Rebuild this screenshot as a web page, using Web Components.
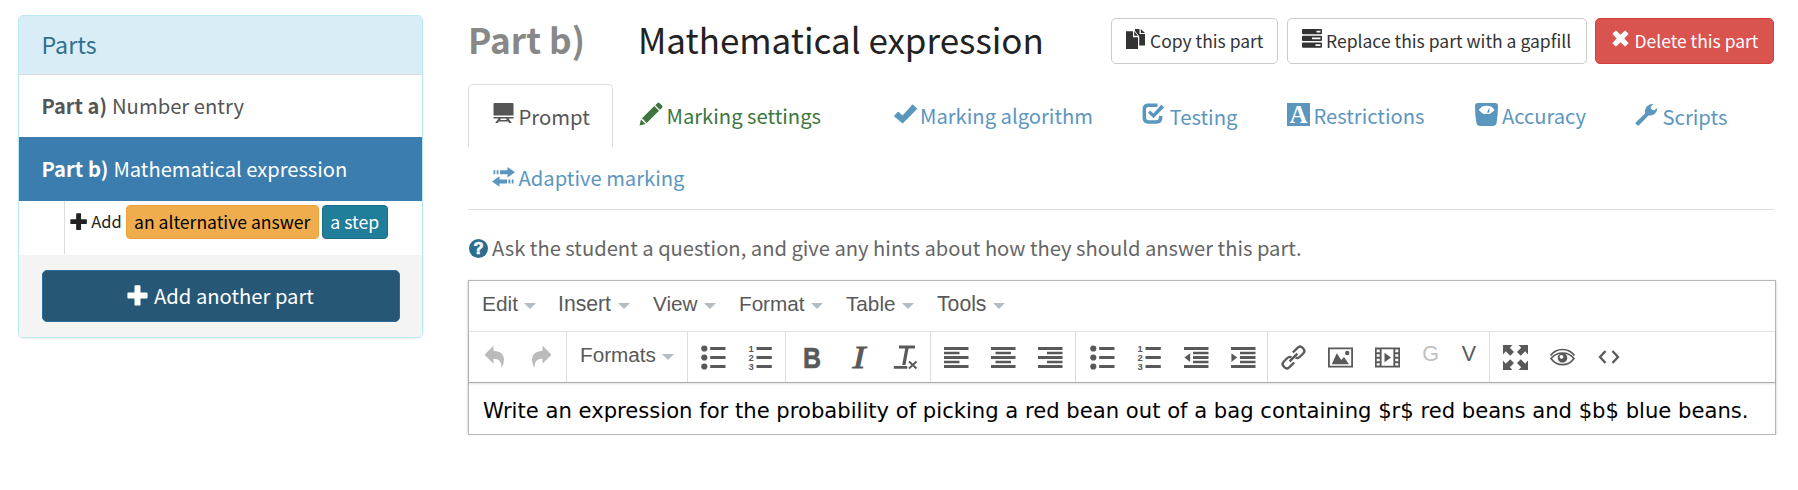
<!DOCTYPE html>
<html lang="en">
<head>
<meta charset="utf-8">
<title>Question editor - parts</title>
<style>
  body { margin: 0; background: #fff; font-family: "Noto Sans CJK SC", "Open Sans", sans-serif; color: #222; }
</style>
</head>
<body>
<question-app></question-app>

<script>
const ICONS = {
  plus: [21, 21, '<path d="M7.500 1.200q0-.9.9-.9h4.200q.9 0 .9.9V7.500h6.200q.9 0 .9.9v4.200q0 .9-.9.9H13.500v6.200q0 .9-.9.9H8.400q-.9 0-.9-.9V13.500H1.300q-.9 0-.9-.9V8.400q0-.9.9-.9H7.500z"/>'],
  prompt: [21, 22, '<path d="M1.500 0h18q1 0 1 1v11.500H.5V1q0-1 1-1zM.5 14h20v1.600H15.500l3.300 4.400h-2.600l-1-1.500H5.800l-1 1.500H2.200l3.300-4.400H.5zM7.900 15.600 7.200 17h6.600l-.7-1.400z"/>'],
  pencil: [24, 24, '<path d="M.5 23.500 2 17.400 6.600 22zM3 16.300 15.300 4 20 8.700 7.700 21zM16.300 3.200 18.600.9q.9-.8 1.700 0l2.900 2.900q.8.900 0 1.700L20.900 7.800z"/>'],
  check: [24, 20, '<path d="M.3 11.500 3.800 8q.5-.5 1 0l3.700 3.600L18.200.7q.5-.5 1 0l3.600 3.600q.5.5 0 1L9.200 19q-.6.5-1.200 0L.3 12.500q-.4-.5 0-1z"/>'],
  testing: [23, 22, '<path d="M15.500 2.300H6.200Q2.300 2.300 2.300 6.200V15q0 3.900 3.900 3.900h8.500q3.900 0 3.900-3.900v-2" fill="none" stroke="currentColor" stroke-width="3.500"/><path d="M6 9.700 8.200 7.500 11.400 10.500 19.200 1.800 22.200 4.400 11.500 15.300z"/>'],
  restrict: [23, 23, '<path d="M0 0h23v23H0z"/><text x="11.500" y="19.600" text-anchor="middle" font-family="Liberation Serif,serif" font-size="25" font-weight="700" fill="#fff">A</text>'],
  scale: [23, 23, '<path fill-rule="evenodd" d="M3 0h17q3 0 3 3-.2 9-1.300 16.500Q21 23 17.500 23h-12Q2 23 1.300 19.500 0 12 0 3 0 0 3 0zm.8 7.200 4 3.400q.8.600 1.700.4 2-.3 4.300 0 .9.100 1.700-.5l4-3.300Q17 2.800 11.500 2.800T3.800 7.200z"/><path d="M12 9.500 14.300 4.500 14.500 9.600z"/>'],
  wrench: [23, 23, '<path d="M.7 19.600 10 10.500Q9.300 6.500 11.800 3.500 14.300.6 18.700.7L16 3.500q-.6 1 0 1.900l1.600 1.500q1 .6 2 0L22.400 4.700q0 4-2.800 6.400-2.600 1.900-5.900 1.200L4.300 21.900q-1 1-2 0L.7 20.900q-.4-.6 0-1.300z"/>'],
  adaptive: [24, 20, '<path d="M1.500 3.300h1.800v4H1.500zM4.700 3.300h1.800v4H4.700zM8 3.300h7.500V0L23 5.300 15.500 10.600V7.300H8zM21.500 12.500h-1.800v4h1.800zM18.300 12.500h-1.800v4h1.800zM15 12.500H7.500V9.200L0 14.500 7.500 19.800v-3.300H15z"/>'],
  copy: [20, 20, '<path d="M0 2.200h7v6h5V20H0zM8.200 2.200 12 6.800H8.200zM9 0h4.500v5h5.500v11.500H13.200V7.200L9 2z"/><path d="M14.800 0 19 4H14.800z"/>'],
  server: [20, 20, '<path fill-rule="evenodd" d="M1 0h18q1 0 1 1v3.300q0 1-1 1H1q-1 0-1-1V1Q0 0 1 0zm13.500 1.700v1.800h4V1.700zM1 6.800h18q1 0 1 1v3.200q0 1-1 1H1q-1 0-1-1V7.800q0-1 1-1zm9 1.700v1.800h8.500V8.500zM1 13.500h18q1 0 1 1v3.300q0 1-1 1H1q-1 0-1-1v-3.300q0-1 1-1zm12.500 1.700v1.800h5v-1.800z"/>'],
  cross: [17, 17, '<path d="M.7 3.500 3.500.700q.4-.4.800 0L8.500 4.700 12.700.700q.4-.4.800 0l2.800 2.800q.4.400 0 .8L12.300 8.500l4 4.200q.4.400 0 .8l-2.800 2.800q-.4.400-.8 0L8.500 12.300l-4.200 4q-.4.400-.8 0L.7 13.500q-.4-.4 0-.8l4-4.200-4-4.200q-.4-.4 0-.8z"/>'],
  help: [19, 19, '<circle cx="9.500" cy="9.500" r="9.500"/><text x="9.500" y="15.300" text-anchor="middle" font-family="Liberation Sans,sans-serif" font-size="16.500" font-weight="700" fill="#fff" stroke="#fff" stroke-width=".7">?</text>'],
  undo: [21, 24, '<path d="M9.500.5v5.200Q19.500 6 20 14.500q.1 5-2.600 8.500.8-9.300-7.900-9.300v5L.500 9.700z"/>'],
  redo: [21, 24, '<path d="M11.500.5v5.200Q1.500 6 1 14.500.9 19.500 3.600 23q-.8-9.300 7.900-9.300v5l9-9z"/>'],
  ul: [25, 25, '<circle cx="3.300" cy="3.500" r="3.100"/><circle cx="3.300" cy="12.500" r="3.100"/><circle cx="3.300" cy="21.500" r="3.100"/><path d="M9.200 2h15.300v3H9.200zM9.200 11h15.300v3H9.200zM9.200 20h15.300v3H9.200z"/>'],
  ol: [25, 25, '<path d="M8.500 2h15.300v3H8.500zM8.500 11h15.300v3H8.500zM8.500 20h15.300v3H8.500z"/><g font-family="Liberation Sans,sans-serif" font-weight="700" font-size="9.500"><text x=".5" y="6.800">1</text><text x=".5" y="15.800">2</text><text x=".5" y="24.800">3</text></g>'],
  bold: [20, 25, '<text x="10" y="22.500" text-anchor="middle" font-family="Liberation Sans,sans-serif" font-weight="700" font-size="29.500" textLength="18" lengthAdjust="spacingAndGlyphs" stroke="currentColor" stroke-width=".6">B</text>'],
  italic: [22, 25, '<text x="11" y="22.500" text-anchor="middle" font-family="Liberation Serif,serif" font-style="italic" font-size="31" textLength="13" lengthAdjust="spacingAndGlyphs" stroke="currentColor" stroke-width=".8">I</text>'],
  clear: [25, 25, '<path d="M6 .5h16v3h-6.500L12.500 20H9.200L12.200 3.500H6zM.8 21h13.500v2.800H.8z"/><path d="M16 16.500l7.500 7M23.500 16.500l-7.500 7" stroke="currentColor" stroke-width="2"/>'],
  left: [25, 21, '<path d="M0 0h24.500v3H0zM0 4.700h15.500v2.600H0zM0 9h24.500v3H0zM0 13.700h15.500v2.600H0zM0 18h24.500v3H0z"/>'],
  center: [25, 21, '<path d="M0 0h24.500v3H0zM4.500 4.700H20v2.600H4.500zM0 9h24.500v3H0zM4.500 13.700H20v2.600H4.500zM0 18h24.500v3H0z"/>'],
  right: [25, 21, '<path d="M0 0h24.500v3H0zM9 4.700h15.500v2.600H9zM0 9h24.500v3H0zM9 13.700h15.500v2.600H9zM0 18h24.500v3H0z"/>'],
  outdent: [25, 21, '<path d="M0 0h24.500v3H0zM9 4.700h15.500v2.600H9zM9 9h15.500v3H9zM9 13.700h15.500v2.600H9zM0 18h24.500v3H0zM6.200 6.200v8.800L.4 10.600z"/>'],
  indent: [25, 21, '<path d="M0 0h24.500v3H0zM9 4.700h15.500v2.600H9zM9 9h15.500v3H9zM9 13.700h15.500v2.600H9zM0 18h24.500v3H0zM.4 6.200v8.800l5.800-4.400z"/>'],
  link: [25, 25, '<g transform="rotate(-45 12.500 12.500)" fill="none" stroke="currentColor" stroke-width="2.300"><path d="M9.500 16.500H2.800Q-.8 16.500-.8 13V12Q-.8 8.500 2.800 8.500H7.500Q10.500 8.500 11 11M15.500 8.500h6.700q3.600 0 3.600 3.500v1q0 3.500-3.600 3.500h-4.700Q14.500 16.500 14 14"/><path d="M7 12.500h11" stroke-width="2.400"/></g>'],
  image: [25, 21, '<path fill-rule="evenodd" d="M0 .5h25v20H0zM1.800 2.300v16.400h21.400V2.300z"/><path d="M3.800 17.300 8.800 6.200 13.300 13 16 10 21 17.300z"/><circle cx="19.200" cy="6" r="2.200"/>'],
  media: [25, 21, '<path fill-rule="evenodd" d="M0 .5h25v20H0zM6.600 2.300v16.400h11.800V2.300zM1.700 2.600v2.600h3V2.600zM1.700 7.200v2.600h3V7.200zM1.700 11.700v2.600h3v-2.600zM1.700 16.200v2.400h3v-2.400zM20.300 2.600v2.600h3V2.600zM20.300 7.200v2.600h3V7.200zM20.300 11.700v2.600h3v-2.600zM20.300 16.200v2.400h3v-2.400z"/><path d="M9.500 5.700 16 10.500 9.500 15.300z"/>'],
  full: [25, 25, '<path d="M0 0h9.500L6.800 2.700 11 6.900 7.200 10.700 2.800 6.300 0 9.500z"/><path d="M25 0h-9.500l2.700 2.700L14 6.900l3.800 3.800 4.400-4.400L25 9.500zM0 25h9.500l-2.700-2.700L11 18.100 7.200 14.300 2.800 18.700 0 15.500zM25 25h-9.500l2.700-2.700L14 18.100l3.800-3.800 4.400 4.400L25 15.500z"/>'],
  eye: [25, 19, '<path d="M.6 7.500Q5 1.500 12.500 1.500T24.400 7.500" fill="none" stroke="currentColor" stroke-width="1.700"/><path d="M1 10.500Q5.500 5 12.500 5T24 10.500Q19.500 16.700 12.500 16.700T1 10.500z" fill="none" stroke="currentColor" stroke-width="1.700"/><path fill-rule="evenodd" d="M12.500 5a4.800 4.800 0 1 0 .01 0zM11.500 7a1.900 1.900 0 1 1-.01 0z"/>'],
  code: [22, 14, '<path d="M7.500 1 2 7l5.500 6M14.500 1 20 7l-5.500 6" fill="none" stroke="currentColor" stroke-width="2.300"/>']
};

/* <ui-icon name> : one glyph from the icon table, drawn at its natural size */
class UiIcon extends HTMLElement {
  connectedCallback() {
    if (this.shadowRoot) return;
    const [w, h, body] = ICONS[this.getAttribute('name')];
    const k = +(this.getAttribute('scale') || 1);
    this.attachShadow({ mode: 'open' }).innerHTML = `
      <style>:host{display:inline-flex;flex:none;font-style:normal} svg{display:block;overflow:visible;fill:currentColor}</style>
      <svg width="${w * k}" height="${h * k}" viewBox="0 0 ${w} ${h}" aria-hidden="true">${body}</svg>`;
  }
}

/* <fit-text width> : one line of text sized to fill the given width */
class FitText extends HTMLElement {
  connectedCallback() {
    if (this.shadowRoot) return;
    this.attachShadow({ mode: 'open' }).innerHTML =
      '<style>:host{display:inline-block;flex:none;white-space:nowrap;line-height:1.4} span{display:inline-block}</style><span><slot></slot></span>';
    const natural = this.shadowRoot.querySelector('span').getBoundingClientRect().width;
    const size = parseFloat(getComputedStyle(this).fontSize);
    if (natural) this.style.fontSize = (size * this.getAttribute('width') / natural).toFixed(2) + 'px';
  }
}

class PartsPanel extends HTMLElement {
  connectedCallback() {
    this.attachShadow({ mode: 'open' }).innerHTML = `
      <style>
        :host{display:block;box-sizing:border-box;width:405px;height:323px;border:1px solid #b8e9f1;border-radius:5px;overflow:hidden;box-shadow:0 1px 2px rgba(0,0,0,.06);font-size:20px}
        header{height:56px;padding:0 0 2px 22.500px;display:flex;box-sizing:content-box;align-items:center;background:#d9edf6;border-bottom:1px solid #d5dadd;color:#31708f;font-size:22px}
        .add{display:flex;height:54px;box-sizing:border-box;padding-left:45px}
        .in{display:flex;flex:1;align-items:flex-start;border-left:1px solid #ddd;height:53px;padding:4px 0 0 5px;box-sizing:border-box;font-size:16px}
        .in>*{height:33px;display:flex;align-items:center}
        .b{border:1px solid;border-radius:4px;justify-content:center;box-sizing:border-box;height:34px!important}
        .o{background:#f0ad4e;border-color:#eea236;color:#000;margin:0 3px 0 4px;width:193px}
        .t{background:#217e9b;border-color:#1b6c85;color:#fff;width:66px;padding-bottom:1px}
        .p{margin:0 4px 0 0;height:33px}
        footer{background:#f4f4f4;height:84px;padding:15px 22px 0 23px;box-sizing:border-box}
        button{all:unset;box-sizing:border-box;width:358px;height:52px;border:1px solid #2a6c9c;border-radius:5px;background:#265777;color:#fff;display:flex;align-items:center;justify-content:center;gap:6px;padding:0 1px 0 0}
        button ui-icon{padding-bottom:2px}
      </style>
      <header><fit-text width="55">Parts</fit-text></header>
      <part-item label="Part a)" lw="65.500" name="Number entry" nw="132"></part-item>
      <part-item label="Part b)" lw="67" name="Mathematical expression" nw="234" active></part-item>
      <div class="add"><div class="in"><div class="p"><ui-icon name="plus" scale=".82"></ui-icon></div><div><fit-text width="30.500">Add</fit-text></div>
        <div class="b o"><fit-text width="176.500">an alternative answer</fit-text></div><div class="b t"><fit-text width="49">a step</fit-text></div></div></div>
      <footer><button><ui-icon name="plus"></ui-icon><fit-text width="160">Add another part</fit-text></button></footer>`;
  }
}

class PartItem extends HTMLElement {
  connectedCallback() {
    const g = n => this.getAttribute(n);
    this.attachShadow({ mode: 'open' }).innerHTML = `
      <style>:host{display:flex;box-sizing:border-box;height:62px;padding:0 0 0 22.500px;align-items:center;gap:5px;color:#555}
      :host([active]){background:#3a7dae;color:#fff;height:64px} b{display:flex}</style>
      <b><fit-text width="${g('lw')}">${g('label')}</fit-text></b><fit-text width="${g('nw')}">${g('name')}</fit-text>`;
  }
}

class UiButton extends HTMLElement {
  connectedCallback() {
    this.attachShadow({ mode: 'open' }).innerHTML = `
      <style>:host{display:flex;box-sizing:border-box;height:46px;border:1px solid #ccc;border-radius:5px;background:#fff;color:#333;align-items:center;font-size:18px;padding-left:14.500px}
      :host([danger]){background:#d9534f;border-color:#d43f3a;color:#fff;padding-left:16px}
      i{display:flex;width:24px;padding-bottom:5px}
      :host([danger]) i{width:22.500px}</style>
      <i><ui-icon name="${this.getAttribute('icon')}"></ui-icon></i><slot></slot>`;
  }
}

class UiTab extends HTMLElement {
  connectedCallback() {
    this.attachShadow({ mode: 'open' }).innerHTML = `
      <style>:host{display:flex;flex:none;box-sizing:border-box;height:63px;align-items:center;color:#5b96bf;font-size:20px;padding:1px 0 0 23.500px}
      :host([done]){color:#3c763d}
      :host([active]){border:1px solid #ddd;border-bottom:0;border-radius:5px 5px 0 0;color:#555;padding:0 0 0 23.500px}
      i{display:flex;height:23px;align-items:center;padding-bottom:4px}</style>
      <i><ui-icon name="${this.getAttribute('icon')}"></ui-icon></i><slot></slot>`;
    this.shadowRoot.querySelector('i').style.width = this.getAttribute('gap') + 'px';
  }
}

class MenuItem extends HTMLElement {
  connectedCallback() {
    this.attachShadow({ mode: 'open' }).innerHTML = `
      <style>:host{display:flex;align-items:center;color:#595959;font:20px "Liberation Sans",Arial,sans-serif}
      i{margin:4px 0 0 6.500px;border:6px solid transparent;border-top-color:#b5bcc2;border-bottom:0}</style>
      <slot></slot><i></i>`;
  }
}

class ToolGroup extends HTMLElement {
  connectedCallback() {
    this.attachShadow({ mode: 'open' }).innerHTML = `
      <style>:host{display:flex;flex:none;box-sizing:border-box;height:50px;align-items:center;border-right:1px solid #ddd;color:#595959}
      :host([last]){border:0} :host([muted]){color:#bbb}
      ::slotted(ui-icon),::slotted(span){width:var(--cell,47px);justify-content:center}</style><slot></slot>`;
  }
}

class RichEditor extends HTMLElement {
  connectedCallback() {
    const t = names => names.split(' ').map(n => `<ui-icon name="${n}"></ui-icon>`).join('');
    this.attachShadow({ mode: 'open' }).innerHTML = `
      <style>
        :host{display:block;box-sizing:border-box;width:1308px;height:155px;border:1px solid #b5b5b5;box-shadow:0 1px 3px rgba(0,0,0,.2)}
        .menu{height:50px;display:flex;align-items:center;padding:0 0 4px 13px;box-sizing:border-box}
        .bar{height:52px;box-sizing:border-box;display:flex;border-top:1px solid #e2e2e2;border-bottom:1px solid #aaa;box-shadow:0 1px 2px rgba(0,0,0,.12);font:20px "Liberation Sans",Arial,sans-serif}
        .ltr{display:flex;padding-bottom:5px;font-size:21.500px}
        .body{font-family:"DejaVu Sans",Verdana,sans-serif;color:#000;font-size:20px;padding:13px 0 0 14px}
        .g1{padding-left:2px;width:98px}.g2{width:121px;padding:0 0 5px 13px}.g3{width:98px;padding-left:2px}.g4{width:145px;padding-left:2px}
        .g5{width:145px;padding-left:2px}.g6{width:192px;padding-left:2.500px}.g7{width:222px;padding-left:2px}.g8{padding-left:1.500px}
      </style>
      <div class="menu">
        <menu-item style="width:76px"><fit-text width="36">Edit</fit-text></menu-item>
        <menu-item style="width:95px"><fit-text width="53">Insert</fit-text></menu-item>
        <menu-item style="width:86px"><fit-text width="44.500">View</fit-text></menu-item>
        <menu-item style="width:107px"><fit-text width="65.500">Format</fit-text></menu-item>
        <menu-item style="width:91px"><fit-text width="49.500">Table</fit-text></menu-item>
        <menu-item><fit-text width="49.500">Tools</fit-text></menu-item>
      </div>
      <div class="bar">
        <tool-group class="g1" muted>${t('undo redo')}</tool-group>
        <tool-group class="g2"><menu-item><fit-text width="76">Formats</fit-text></menu-item></tool-group>
        <tool-group class="g3">${t('ul ol')}</tool-group>
        <tool-group class="g4">${t('bold italic clear')}</tool-group>
        <tool-group class="g5">${t('left center right')}</tool-group>
        <tool-group class="g6">${t('ul ol outdent indent')}</tool-group>
        <tool-group class="g7">${t('link image media')}<span class="ltr" style="color:#c0c0c0;width:39px">G</span><span class="ltr" style="width:38px">V</span></tool-group>
        <tool-group class="g8" last>${t('full eye code')}</tool-group>
      </div>
      <div class="body"><fit-text width="1266">Write an expression for the probability of picking a red bean out of a bag containing $r$ red beans and $b$ blue beans.</fit-text></div>`;
  }
}

class QuestionApp extends HTMLElement {
  connectedCallback() {
    this.attachShadow({ mode: 'open' }).innerHTML = `
      <style>
        :host{display:grid;grid-template-columns:405px 1308px;gap:45px;padding:15px 0 0 18px}
        .head{display:flex;height:69px;align-items:flex-start;font-size:34px}
        .head h1,.head h2{margin:0;font-size:34px;font-weight:400;display:flex;align-items:center;height:48px}
        .head h1{color:#888;font-weight:700;width:170px}
        .btns{display:flex;gap:8.500px;margin:3px 2px 0 auto}
        .tabs{border-bottom:1px solid #ddd;width:1306px;height:126px;box-sizing:border-box}
        .row{display:flex;height:63px}
        .help{display:flex;align-items:center;height:70px;color:#666;font-size:20px;padding-top:6px;box-sizing:border-box}
        .help ui-icon{color:#2b6d8f;width:23.500px;padding-left:.5px}
      </style>
      <parts-panel></parts-panel>
      <main>
        <div class="head">
          <h1><fit-text width="117">Part b)</fit-text></h1><h2><fit-text width="406">Mathematical expression</fit-text></h2>
          <div class="btns">
            <ui-button icon="copy" style="width:167.500px"><fit-text width="113.500">Copy this part</fit-text></ui-button>
            <ui-button icon="server" style="width:300px"><fit-text width="245.500">Replace this part with a gapfill</fit-text></ui-button>
            <ui-button icon="cross" danger style="width:179px"><fit-text width="124">Delete this part</fit-text></ui-button>
          </div>
        </div>
        <div class="tabs">
          <div class="row">
            <ui-tab icon="prompt" gap="26" active style="width:145px;margin-right:2px"><fit-text width="71.500">Prompt</fit-text></ui-tab>
            <ui-tab icon="pencil" gap="28" done style="width:255px"><fit-text width="154.500">Marking settings</fit-text></ui-tab>
            <ui-tab icon="check" gap="26.500" style="width:248px"><fit-text width="173">Marking algorithm</fit-text></ui-tab>
            <ui-tab icon="testing" gap="28" style="width:145px"><fit-text width="68">Testing</fit-text></ui-tab>
            <ui-tab icon="restrict" gap="27" style="width:188px"><fit-text width="111">Restrictions</fit-text></ui-tab>
            <ui-tab icon="scale" gap="27.500" style="width:160.500px"><fit-text width="84">Accuracy</fit-text></ui-tab>
            <ui-tab icon="wrench" gap="27.500"><fit-text width="65">Scripts</fit-text></ui-tab>
          </div>
          <div class="row"><ui-tab icon="adaptive" gap="27" style="height:62px"><fit-text width="166">Adaptive marking</fit-text></ui-tab></div>
        </div>
        <div class="help"><ui-icon name="help"></ui-icon><fit-text width="810">Ask the student a question, and give any hints about how they should answer this part.</fit-text></div>
        <rich-editor></rich-editor>
      </main>`;
  }
}

customElements.define('ui-icon', UiIcon);
customElements.define('part-item', PartItem);
customElements.define('ui-button', UiButton);
customElements.define('ui-tab', UiTab);
customElements.define('menu-item', MenuItem);
customElements.define('tool-group', ToolGroup);
customElements.define('parts-panel', PartsPanel);
customElements.define('rich-editor', RichEditor);
customElements.define('question-app', QuestionApp);
customElements.define('fit-text', FitText);
</script>
</body>
</html>
